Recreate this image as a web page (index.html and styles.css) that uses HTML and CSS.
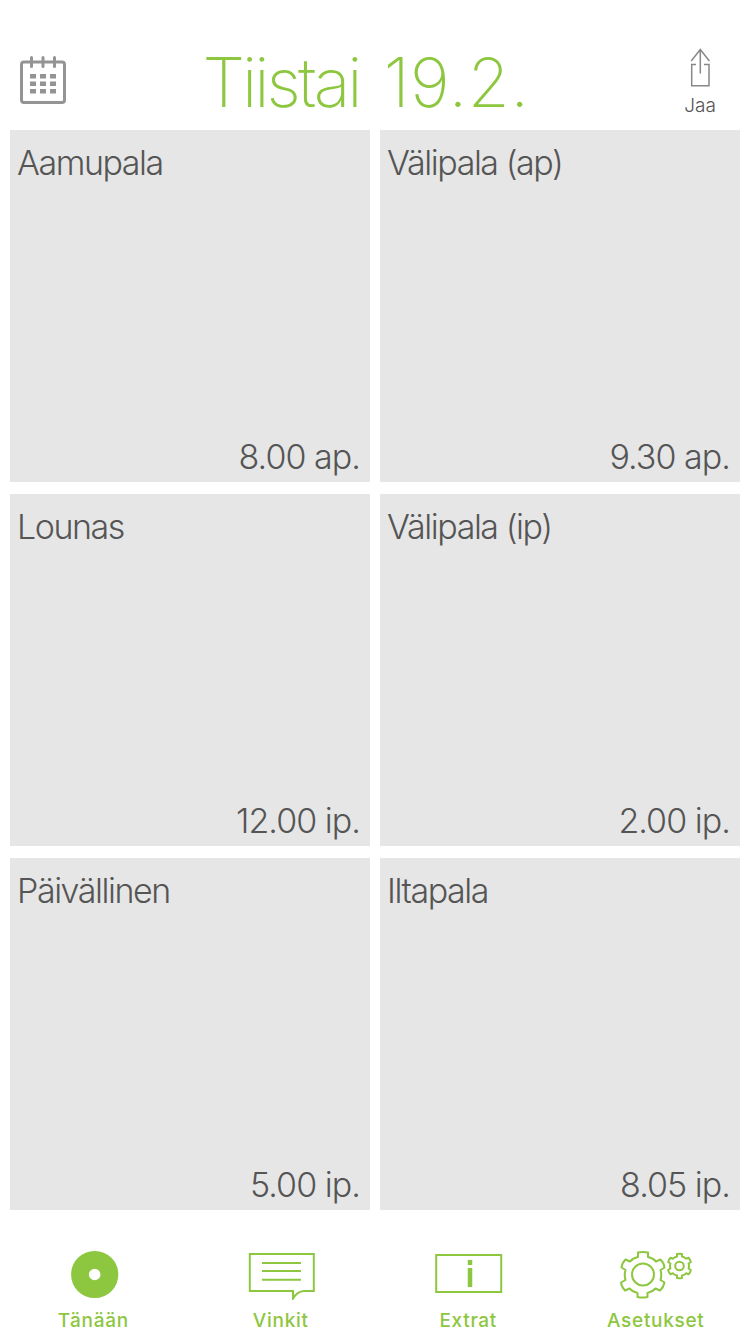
FILE: index.html
```html
<!DOCTYPE html>
<html lang="fi">
<head>
  <meta charset="UTF-8">
  <meta name="viewport" content="width=device-width, initial-scale=1.0">
  <title>Tänään</title>
  <link rel="stylesheet" href="styles.css">
</head>
<body>
  <header>
    <button class="calendar" aria-label="Kalenteri">
      <svg width="46" height="48" viewBox="0 0 46 48">
        <rect x="1.5" y="6" width="43" height="40.5" rx="2.5" fill="none" stroke="#949494" stroke-width="3"/>
        <path d="M11.5 1.5v9M23 1.5v9M34.5 1.5v9" stroke="#949494" stroke-width="3" stroke-linecap="round"/>
        <path d="M10 20.2h6M20 20.2h6M30 20.2h6M10 27.7h6M20 27.7h6M30 27.7h6M10 35.2h6M20 35.2h6M30 35.2h6" stroke="#949494" stroke-width="4.6"/>
      </svg>
    </button>
    <h1><span class="day">Tiistai</span> <span class="date">19.2.</span></h1>
    <button class="share">
      <svg width="20" height="40" viewBox="0 0 20 40">
        <path d="M6 16.5H1.7v21.3h17.3V16.5h-5M10.3 1.5v24M1.2 13l9.1-11.5 9.1 11.5" fill="none" stroke="#888" stroke-width="1.5"/>
      </svg>
      <span>Jaa</span>
    </button>
  </header>

  <main class="meals">
    <div class="meal">
      <h2>Aamupala</h2>
      <p>8.00 ap.</p>
    </div>
    <div class="meal">
      <h2>Välipala (ap)</h2>
      <p>9.30 ap.</p>
    </div>
    <div class="meal">
      <h2>Lounas</h2>
      <p>12.00 ip.</p>
    </div>
    <div class="meal">
      <h2>Välipala (ip)</h2>
      <p>2.00 ip.</p>
    </div>
    <div class="meal">
      <h2>Päivällinen</h2>
      <p>5.00 ip.</p>
    </div>
    <div class="meal">
      <h2>Iltapala</h2>
      <p>8.05 ip.</p>
    </div>
  </main>

  <nav>
    <a href="#today">
      <svg width="72" height="50" viewBox="0 0 72 50">
        <circle cx="36.7" cy="24.5" r="14.7" fill="none" stroke="#8dc63f" stroke-width="17.8"/>
      </svg>
      <span>Tänään</span>
    </a>
    <a href="#tips">
      <svg width="72" height="50" viewBox="0 0 72 50">
        <path d="M4.800 4h64v37H59q-7 .5-11 7.500V41H4.800zM17 13h39M17 21h39M17 29.700h39" fill="none" stroke="#8dc63f" stroke-width="2"/>
      </svg>
      <span>Vinkit</span>
    </a>
    <a href="#extras">
      <svg width="72" height="50" viewBox="0 0 72 50">
        <rect x="3.2" y="5" width="65" height="37" fill="none" stroke="#8dc63f" stroke-width="2"/>
        <path d="M37 10v5M37 18v19" stroke="#8dc63f" stroke-width="4.5"/>
      </svg>
      <span>Extrat</span>
    </a>
    <a href="#settings">
      <svg width="72" height="50" viewBox="0 0 72 50">
        <g fill="none" stroke="#8dc63f" stroke-width="2" stroke-linejoin="round">
          <path d="M18 2.500q5-1.200 10 0v4.500q5 1 8 4.500l4.500-2q3.500 3.500 4 8l-4 2.500q1.500 5 0 10l4 2.500q-1 5-4.500 8l-4.500-2q-3 3.500-8 4.500v4q-5 1.200-10 0V43q-5-1-8-4.500l-4.500 2q-3.500-3.500-4-8L5.500 30q-1.500-5 0-10l-4-2.500q.5-4.500 4-8l4.500 2q3-3.500 8-4.500z"/>
          <circle cx="23" cy="24.500" r="11"/>
          <circle cx="59.500" cy="16" r="4.300"/>
          <path d="M57 4q2.500-.7 5 0v2.500q2.500.5 4 2.200l2.500-1q1.800 1.800 2.300 4.300L68.600 13.500q.8 2.500 0 5l2.200 1.500q-.5 2.500-2.300 4.300l-2.500-1q-1.500 1.700-4 2.200V28q-2.500.7-5 0v-2.500q-2.500-.5-4-2.200l-2.500 1q-1.800-1.800-2.300-4.300l2.200-1.500q-.8-2.500 0-5l-2.200-1.500q.5-2.500 2.300-4.300l2.500 1q1.500-1.700 4-2.200z"/>
        </g>
      </svg>
      <span>Asetukset</span>
    </a>
  </nav>
</body>
</html>
```

FILE: styles.css
```css
* {
  box-sizing: border-box;
}

body {
  font-family: Inter, "Liberation Sans", sans-serif;
  margin: 0;
  height: 1334px;
  background: #fff;
  color: #555;
  display: flex;
  flex-direction: column;
}

header {
  flex: 0 0 130px;
  padding: 40px 30px 0 20px;
  display: grid;
  grid-template-columns: 76px 1fr 84px;
  align-items: start;
}

h1, h2, p {
  margin: 0;
}

h1 {
  color: #8dc63f;
  font-size: 68px;
  font-weight: 200;
  line-height: 84px;
  text-align: center;
  white-space: nowrap;
}

.day {
  letter-spacing: -3px;
}

.date {
  letter-spacing: 0.5px;
  margin-left: 5px;
}

button {
  border: none;
  background: none;
  padding: 0;
  color: inherit;
  font: inherit;
}

svg {
  display: block;
}

.calendar {
  padding-top: 16px;
}

.share {
  width: 40px;
  padding-top: 8px;
  justify-self: end;
  display: flex;
  flex-direction: column;
  align-items: center;
  font-size: 19px;
  font-weight: 300;
  line-height: 35px;
}

.meals {
  flex: none;
  padding: 0 10px;
  display: grid;
  grid-template-columns: 1fr 1fr;
  grid-auto-rows: 352px;
  gap: 12px 10px;
}

.meal {
  background: #e6e6e6;
  padding: 12px 8px 4px 7px;
  display: flex;
  flex-direction: column;
  justify-content: space-between;
}

.meal h2, .meal p {
  font-size: 34px;
  font-weight: 300;
  line-height: 42px;
}

.meal h2 {
  letter-spacing: -1.45px;
}

.meal p {
  letter-spacing: -0.95px;
  padding-right: 2px;
  text-align: right;
}

nav {
  flex: 1;
  padding-top: 40px;
  display: grid;
  grid-template-columns: repeat(4, 1fr);
}

nav a {
  display: flex;
  flex-direction: column;
  align-items: center;
  color: #8dc63f;
  font-size: 19px;
  font-weight: 500;
  line-height: 41px;
  letter-spacing: 0.7px;
  text-decoration: none;
}

nav span {
  margin-right: 1px;
}
```
